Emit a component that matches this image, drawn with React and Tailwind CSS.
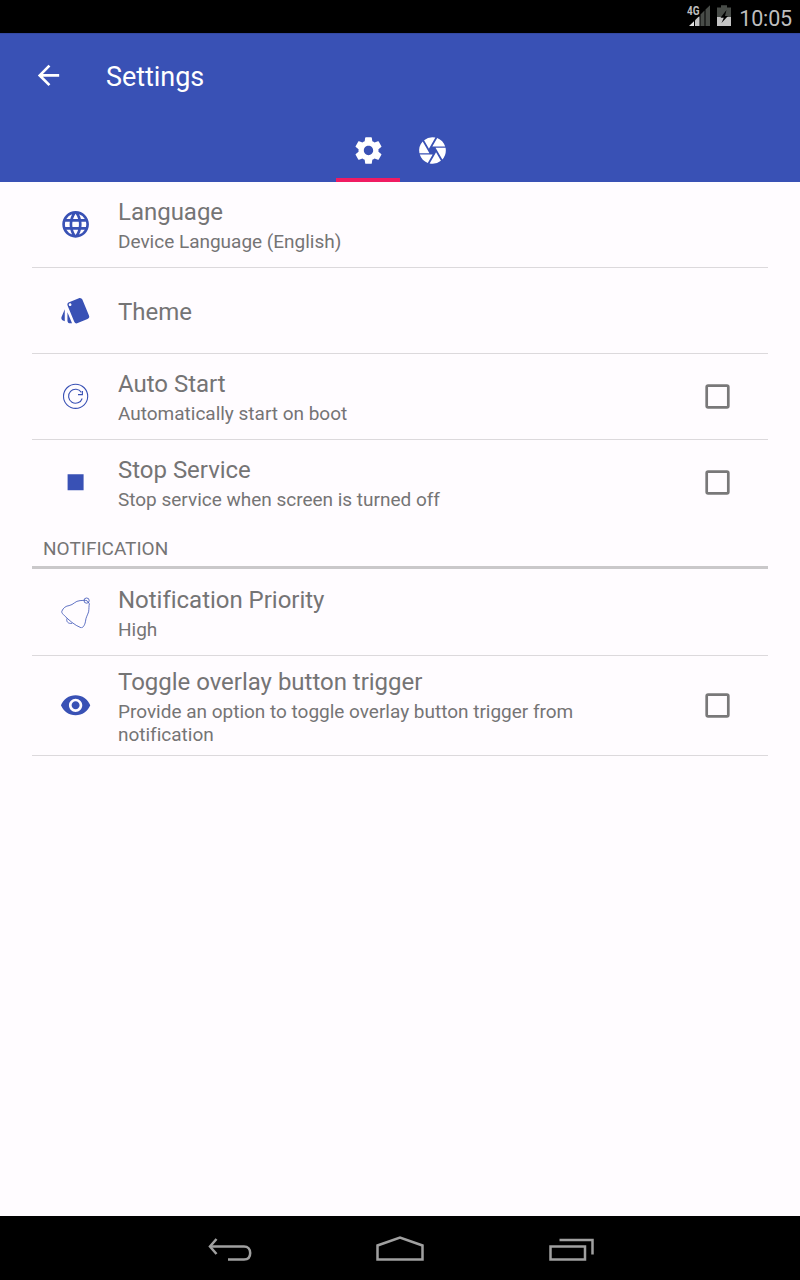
import React from "react";
import { MdArrowBack, MdCamera, MdLanguage, MdStyle, MdStop, MdRemoveRedEye } from "react-icons/md";

function StatusBar() {
  return (
    <div className="flex h-[33px] items-start justify-end bg-black pr-[8px] text-[#bebebe]">
      <svg className="mt-[4px] h-[24px] w-[24px]" viewBox="0 0 24 24">
        <path d="M3 22 L8 17.200 V22Z" fill="#e0e0e0" />
        <path d="M9 16.200 L13.500 11.700 V22 H9Z" fill="#c4c4c4" />
        <path d="M14.500 10.500 L18.500 6.500 V22 H14.500Z M19.500 5.600 L24 1.200 V22 H19.500Z" fill="#484c48" />
        <path d="M0 2 H14 V12.500 H0Z" fill="#000" />
        <text x="1" y="11.200" fontSize="13.300" fontWeight="700" fontFamily="Roboto, sans-serif" textLength="12.500" lengthAdjust="spacingAndGlyphs" fill="#bdbdbd">4G</text>
      </svg>
      <svg className="ml-[7px] mt-[4px] h-[24px] w-[14px]" viewBox="0 0 14 24">
        <path d="M0 3.500 H4 V1.200 H10 V3.500 H14 V13 H0Z" fill="#484c48" />
        <path d="M0 13 H14 V22 H0Z" fill="#c4c4c4" />
        <path d="M9.500 6 L3.500 13.800 H6.800 L4.500 19 L11 12 H8Z" fill="#000" />
      </svg>
      <span className="ml-[8px] mt-[5px] text-[21.5px] leading-[27px] tracking-[-0.15px]">10:05</span>
    </div>
  );
}

function AppBar() {
  return (
    <header className="flex h-[149px] flex-col bg-[#3951b5] text-white shadow-[inset_0_1px_0_#3449a3]">
      <div className="flex h-[85px] items-center pl-[32px]">
        <MdArrowBack className="h-[32px] w-[32px] translate-x-[0.5px] translate-y-[-0.6px]" />
        <h1 className="ml-[42px] mt-[3px] text-[27px] leading-[32px] tracking-[-0.05px]">Settings</h1>
      </div>
      <nav className="flex h-[64px] justify-center">
        <div className="flex w-[64px] items-center justify-center border-b-4 border-[#f01b62] pt-[4px]">
          <svg className="h-[32px] w-[32px] translate-x-[0.5px] translate-y-[0.5px]" viewBox="0 0 24 24" fill="currentColor">
            <path d="M19.43 12.98c.04-.32.07-.64.07-.98s-.03-.66-.07-.98l2.11-1.65c.19-.15.24-.42.12-.64l-2-3.46c-.12-.22-.39-.3-.61-.22l-2.49 1c-.52-.4-1.08-.73-1.69-.98l-.38-2.65C14.46 2.18 14.25 2 14 2h-4c-.25 0-.46.18-.49.42l-.38 2.65c-.61.25-1.17.59-1.69.98l-2.49-1c-.23-.09-.49 0-.61.22l-2 3.46c-.13.22-.07.49.12.64l2.11 1.65c-.04.32-.07.65-.07.98s.03.66.07.98l-2.11 1.65c-.19.15-.24.42-.12.64l2 3.46c.12.22.39.3.61.22l2.49-1c.52.4 1.08.73 1.69.98l.38 2.65c.03.24.24.42.49.42h4c.25 0 .46-.18.49-.42l.38-2.65c.61-.25 1.17-.59 1.69-.98l2.49 1c.23.09.49 0 .61-.22l2-3.46c.12-.22.07-.49-.12-.64l-2.11-1.65zM12 15.5c-1.93 0-3.5-1.57-3.5-3.5s1.57-3.5 3.5-3.5 3.5 1.57 3.5 3.5-1.57 3.5-3.5 3.5z" />
          </svg>
        </div>
        <div className="flex w-[64px] items-center justify-center">
          <MdCamera className="h-[32px] w-[32px] translate-x-[0.5px] translate-y-[0.5px]" />
        </div>
      </nav>
    </header>
  );
}

function RestartIcon({ className }) {
  return (
    <svg className={className} viewBox="0 0 32 32" fill="none" stroke="currentColor" strokeWidth="1.100">
      <circle cx="16" cy="16" r="12.100" />
      <path d="M22.600 18.200 A7 7 0 1 1 21.800 12.100" />
      <path d="M22.800 10.800 V14.300 H18.400" />
    </svg>
  );
}

function BellIcon({ className }) {
  return (
    <svg className={className} viewBox="0 0 32 32" fill="none" stroke="currentColor" strokeWidth="0.800">
      <path d="M2.200 15 C3.500 11.500 6.500 9.600 9.500 9.300 C14 8.500 15.500 4.500 20.500 4.300 C23.500 4.300 25 3.500 27.500 4.500 L29.800 7.500 C29.100 10 29.600 12 29 15.500 C28 19 26.300 20.500 25.800 25.500 C25.200 29 23 32 21.300 31.400 C15 29 9 23.500 5 19.500 C3 17.500 1.900 16.500 2.200 15Z" />
      <circle cx="27" cy="4.300" r="2.600" />
      <path d="M7.500 22 C6.200 25 8.500 27.800 12.500 27" />
    </svg>
  );
}

function Checkbox() {
  return (
    <div role="checkbox" aria-checked="false" className="ml-[77px] h-[25px] w-[25px]">
      <svg className="h-[25px] w-[25px]" viewBox="0 0 25 25" fill="none">
        <rect x="1.700" y="1.700" width="21.600" height="21.600" rx="1.400" stroke="#797879" strokeWidth="2.700" />
      </svg>
    </div>
  );
}

function Row({ icon: Icon, title, subtitle, checkbox, className }) {
  return (
    <div className={`flex items-center border-b ${className}`}>
      <Icon className="mb-px ml-[27px] h-[32px] w-[32px] shrink-0 translate-x-[0.6px] translate-y-[0.3px] text-[#3951b5]" />
      <div className="ml-[27px] w-[510px] pt-[2px]">
        <div className="text-[24px] leading-[30px] tracking-[-0.02px]">{title}</div>
        {subtitle && <div className="mt-[3px] pb-px text-[19px] leading-[23px] tracking-[-0.01px]">{subtitle}</div>}
      </div>
      {checkbox && <Checkbox />}
    </div>
  );
}

function NavigationBar() {
  return (
    <footer className="flex h-[64px] items-center bg-black pb-[6px] pl-[204px] text-[#a0a0a0]">
      <svg className="h-[40px] w-[52px]" viewBox="0 0 52 40" fill="none" stroke="currentColor" strokeWidth="2.500">
        <path d="M12.500 14 L6 21.500 L12.500 29" />
        <path d="M6 21.500 H40 C44 21.500 46.200 24.500 46.200 28 C46.200 32 44 34.500 40 34.500 H24" />
      </svg>
      <svg className="ml-[118px] h-[40px] w-[52px]" viewBox="0 0 52 40" fill="none" stroke="currentColor" strokeWidth="2.500">
        <path d="M3.500 34.500 V20.500 L26 12.500 L48.500 20.500 V34.500Z" />
      </svg>
      <svg className="ml-[120px] h-[40px] w-[52px]" viewBox="0 0 52 40" fill="none" stroke="currentColor" strokeWidth="2.500">
        <path d="M4.500 21.500 H39 V34.500 H4.500Z M13.500 15 H46.500 V29.500" />
      </svg>
    </footer>
  );
}

export default function App() {
  return (
    <div className="flex h-[1280px] w-[800px] flex-col overflow-hidden bg-[#fffcff] font-['Roboto',sans-serif]">
      <StatusBar />
      <AppBar />
      <main className="mx-[32px] flex-1 text-[#757475]">
        <Row className="h-[86px] border-[#dcd9dc]" icon={MdLanguage} title="Language" subtitle="Device Language (English)" />
        <Row className="h-[86px] border-[#dcd9dc]" icon={MdStyle} title="Theme" />
        <Row className="h-[86px] border-[#dcd9dc]" icon={RestartIcon} title="Auto Start" subtitle="Automatically start on boot" checkbox />
        <Row className="h-[86px] border-transparent" icon={MdStop} title="Stop Service" subtitle="Stop service when screen is turned off" checkbox />
        <h2 className="h-[43px] border-b-[3px] border-[#cac8ca] pl-[11px] pt-[11px] text-[19px] leading-[23px]">NOTIFICATION</h2>
        <Row className="h-[87px] border-[#dcd9dc]" icon={BellIcon} title="Notification Priority" subtitle="High" />
        <Row className="h-[100px] border-[#dcd9dc]" icon={MdRemoveRedEye} title="Toggle overlay button trigger" subtitle="Provide an option to toggle overlay button trigger from notification" checkbox />
      </main>
      <NavigationBar />
    </div>
  );
}
